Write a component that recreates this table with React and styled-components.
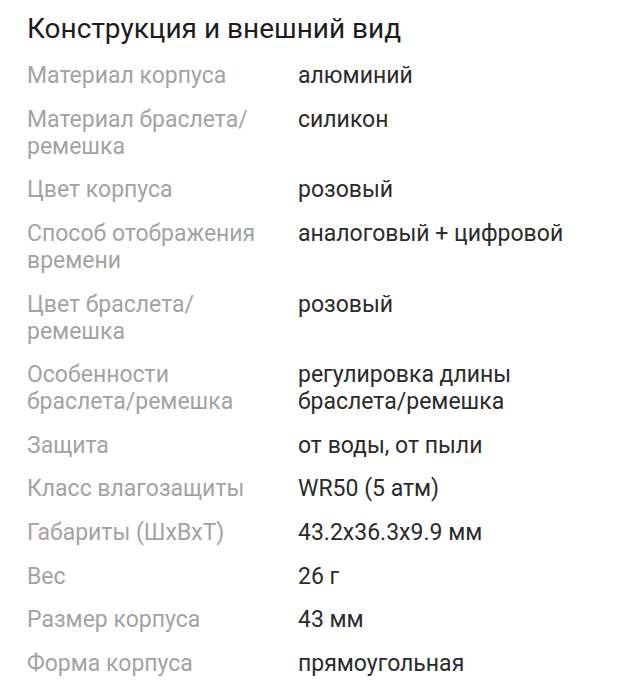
import React from "react";
import styled, { createGlobalStyle } from "styled-components";

const specs = [
  ["Материал корпуса", "алюминий"],
  ["Материал браслета/\nремешка", "силикон"],
  ["Цвет корпуса", "розовый"],
  ["Способ отображения\nвремени", "аналоговый + цифровой"],
  ["Цвет браслета/\nремешка", "розовый"],
  ["Особенности\nбраслета/ремешка", "регулировка длины\nбраслета/ремешка"],
  ["Защита", "от воды, от пыли"],
  ["Класс влагозащиты", "WR50 (5 атм)"],
  ["Габариты (ШхВхТ)", "43.2x36.3x9.9 мм"],
  ["Вес", "26 г"],
  ["Размер корпуса", "43 мм"],
  ["Форма корпуса", "прямоугольная"],
];

const App = () => {
  return (
    <>
      <GlobalStyle />
      <Wrapper>
        <Title>Конструкция и внешний вид</Title>
        <SpecList>
          {specs.map(([label, value]) => (
            <SpecRow key={label}>
              <Label>{label}</Label>
              <Value>{value}</Value>
            </SpecRow>
          ))}
        </SpecList>
      </Wrapper>
    </>
  );
};
export default App;

const GlobalStyle = createGlobalStyle`
  body {
    margin: 0;
    background: #ffffff;
    font-family: Roboto, "Noto Sans", sans-serif;
  }
`;

const Wrapper = styled.div`
  padding: 12px 27px 0 27px;
`;
const Title = styled.h1`
  font-size: 28px;
  font-weight: 400;
  color: #1c1c1c;
  line-height: 34px;
  margin: 0 0 8px 0;
`;
const SpecList = styled.div`
  display: flex;
  flex-direction: column;
`;
const SpecRow = styled.div`
  display: grid;
  grid-template-columns: 271px 1fr;
  padding: 8.3px 0;
  font-size: 23px;
  line-height: 27px;
  white-space: pre-line;
`;
const Label = styled.div`
  color: #a3a3a3;
  padding-right: 10px;
`;
const Value = styled.div`
  color: #2b2b2b;
`;
